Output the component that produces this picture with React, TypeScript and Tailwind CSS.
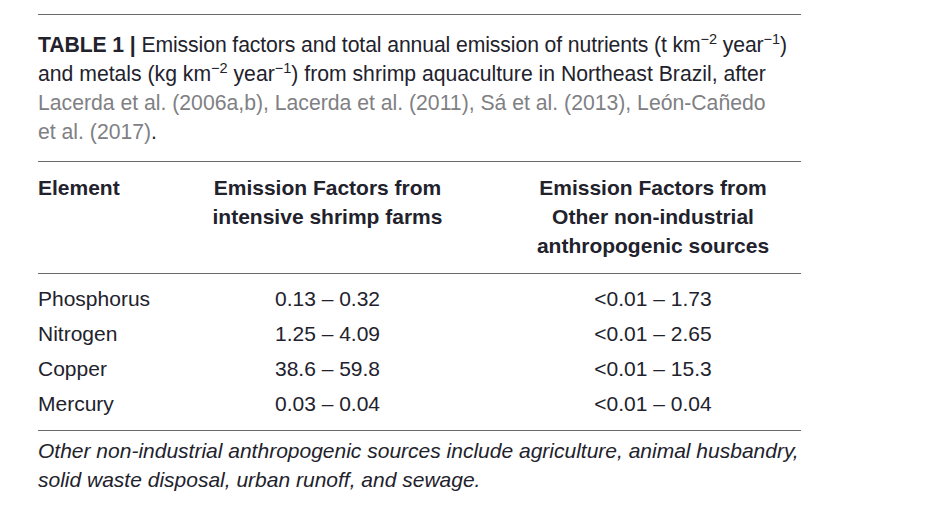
const rows = [
  { element: 'Phosphorus', farms: '0.13 – 0.32', other: '<0.01 – 1.73' },
  { element: 'Nitrogen', farms: '1.25 – 4.09', other: '<0.01 – 2.65' },
  { element: 'Copper', farms: '38.6 – 59.8', other: '<0.01 – 15.3' },
  { element: 'Mercury', farms: '0.03 – 0.04', other: '<0.01 – 0.04' },
]

// superscript exponent, e.g. km−2
function Sup({ children }: { children: React.ReactNode }) {
  return <span className="relative -top-[8px] text-[14.5px] leading-none">{children}</span>
}

export default function App() {
  return (
    <div className="min-h-screen w-[933px] bg-white pt-[14px] pl-[38px] font-['Liberation_Sans',Arial,sans-serif] text-[#22222c]">
      <div className="w-[763px]">
        <div className="h-px bg-[#6a6a6a]" />

        <p className="pt-[15px] pb-[15px] text-[21.2px] leading-[29px] whitespace-nowrap">
          <span className="tracking-[-0.1px]">
            <span className="font-bold">TABLE 1 |</span> Emission factors and total annual emission of nutrients (t km
            <Sup>−2</Sup> year<Sup>−1</Sup>)
          </span>
          <br />
          and metals (kg km<Sup>−2</Sup> year<Sup>−1</Sup>) from shrimp aquaculture in Northeast Brazil, after
          <br />
          <span className="text-[#808084]">
            Lacerda et al. (2006a,b), Lacerda et al. (2011), Sá et al. (2013), León-Cañedo
            <br />
            et al. (2017)
          </span>
          .
        </p>

        <div className="h-px bg-[#6a6a6a]" />

        <div className="grid grid-cols-[112px_355px_296px] pt-[11px] pb-[13px] text-[21px] leading-[29px] font-bold">
          <div>Element</div>
          <div className="text-center">
            Emission Factors from
            <br />
            intensive shrimp farms
          </div>
          <div className="text-center">
            Emission Factors from
            <br />
            Other non-industrial
            <br />
            anthropogenic sources
          </div>
        </div>

        <div className="h-px bg-[#6a6a6a]" />

        <div className="pt-[7px] pb-[9px] text-[21px] leading-[35px]">
          {rows.map((r) => (
            <div key={r.element} className="grid grid-cols-[112px_355px_296px]">
              <div className="whitespace-nowrap">{r.element}</div>
              <div className="text-center">{r.farms}</div>
              <div className="text-center">{r.other}</div>
            </div>
          ))}
        </div>

        <div className="h-px bg-[#6a6a6a]" />

        <p className="pt-[5px] text-[21px] leading-[29px] italic whitespace-nowrap">
          Other non-industrial anthropogenic sources include agriculture, animal husbandry,
          <br />
          solid waste disposal, urban runoff, and sewage.
        </p>
      </div>
    </div>
  )
}
